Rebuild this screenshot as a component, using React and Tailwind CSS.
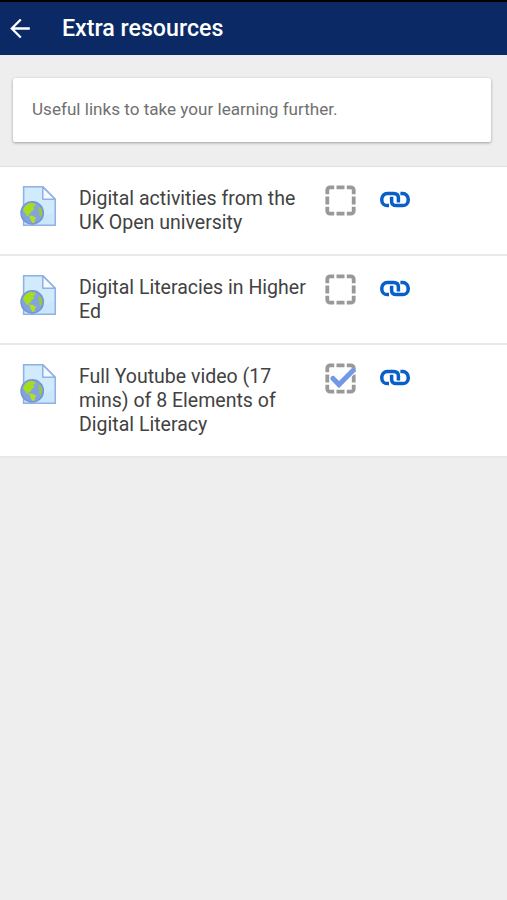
import React from "react";

const resources = [
  { id: 1, lines: ["Digital activities from the", "UK Open university"], done: false },
  { id: 2, lines: ["Digital Literacies in Higher", "Ed"], done: false },
  { id: 3, lines: ["Full Youtube video (17", "mins) of 8 Elements of", "Digital Literacy"], done: true },
];

const BackIcon = () => (
  <svg className="w-5 h-5" viewBox="0 0 20 20" fill="none" stroke="#fff" strokeWidth="2.3">
    <path d="M19.8 9.5H2M10.8.5L1.8 9.5l9 9" />
  </svg>
);

const UrlIcon = () => (
  <svg className="w-9 h-10 mt-px shrink-0" viewBox="0 0 36 40">
    <path d="M3.6.7h19.2l12.5 12.6v26H3.6z" fill="#c9e6fb" stroke="#8fb1e3" strokeWidth="1.5" />
    <path d="M5 2h17v12h12v12L5 38z" fill="#d9effd" opacity=".6" />
    <path d="M22.8.9v12.4h12.3z" fill="#f4faff" stroke="#8fb1e3" strokeWidth="1.5" strokeLinejoin="round" />
    <circle cx="12.2" cy="26.9" r="11.9" fill="#7595d6" />
    <circle cx="12.2" cy="26.9" r="10.3" fill="#83a3df" />
    <path d="M3 24.5c.8-3.8 4-7 8-7.8l4.6 1.2-.6 2.4-2 .8 1.5 2-2.6 2-1.5 2.6-2.2.9.8 1.8-2.4-.8-1.5-2.4z" fill="#a5dc20" />
    <path d="M9 29.4l3.5.4 4 2.2-1.8 1.8.2 2.5-2.6.7-1.7-3.4z" fill="#b5de25" />
    <path d="M19.4 20.6l2.6 3.3.5 4-1.9 3-1.6-2.4.5-2.6-1.3-2z" fill="#96cb35" />
  </svg>
);

const CompletionIcon = ({ done }) => (
  <svg className="w-[31px] h-[31px]" viewBox="0 0 31 31" fill="none">
    <g stroke="#999" strokeWidth="3.8">
      <path d="M2.3 9.2V5.1a2.8 2.8 0 0 1 2.8-2.8h4.1M21.8 2.3h4.1a2.8 2.8 0 0 1 2.8 2.8v4.1M28.7 21.8v4.1a2.8 2.8 0 0 1-2.8 2.8h-4.1M9.2 28.7H5.1a2.8 2.8 0 0 1-2.8-2.8v-4.1" />
      <path d="M11.5 2.3h8M11.5 28.7h8M2.3 11.5v8M28.7 11.5v8" />
    </g>
    {done && (
      <>
        <path d="M8 15.4l6 6.2L28 7.6" stroke="#fff" strokeWidth="7" />
        <path d="M8 15.4l6 6.2L28 7.6" stroke="#7399e6" strokeWidth="5" strokeLinecap="round" />
      </>
    )}
  </svg>
);

const LinkIcon = () => (
  <svg className="w-[30px] h-[17px]" viewBox="0 0 30 17" fill="none" stroke="#085fc8" strokeWidth="3.5">
    <path d="M9 14.6H7.2a5.4 5.4 0 0 1-5.4-5.4V8a5.4 5.4 0 0 1 5.4-5.4h6.4c3 0 4.8 1.8 4.8 4.4v4.4" />
    <path d="M20.4 2.6h2.4A5.4 5.4 0 0 1 28.2 8v1.2a5.4 5.4 0 0 1-5.4 5.4h-6.4c-3 0-4.8-1.8-4.8-4.4V5.8" />
  </svg>
);

const ResourceRow = ({ resource }) => (
  <li className="flex items-start bg-white pl-5 pt-[18px] pb-[18.6px] border-b-2 border-[#e9e9e9]">
    <UrlIcon />
    <div className="ml-[23px] w-[246px] pt-[1.6px] text-[19.55px] leading-[24.4px] text-[#424242] whitespace-nowrap">
      {resource.lines.map(line => (
        <div key={line}>{line}</div>
      ))}
    </div>
    <button className="block"><CompletionIcon done={resource.done} /></button>
    <button className="block ml-6 mt-[6px]"><LinkIcon /></button>
  </li>
);

const App = () => (
  <div className="min-h-screen bg-[#eeeeee] font-['Roboto','Liberation_Sans',sans-serif]">
    <header className="flex items-center h-[55px] pl-[10px] border-t-2 border-black bg-[#0a2965]">
      <BackIcon />
      <h1 className="ml-8 text-[23.2px] font-medium leading-none text-white">Extra resources</h1>
    </header>
    <div className="mt-[23px] ml-[13px] mr-4 h-16 pl-[19px] flex items-center rounded-xs bg-white shadow-[0_1px_3px_rgba(0,0,0,0.35)]">
      <p className="text-[17.1px] text-[#707070]">Useful links to take your learning further.</p>
    </div>
    <ul className="mt-6 border-t border-[#e0e0e0]">
      {resources.map(resource => (
        <ResourceRow key={resource.id} resource={resource} />
      ))}
    </ul>
  </div>
);

export default App;
